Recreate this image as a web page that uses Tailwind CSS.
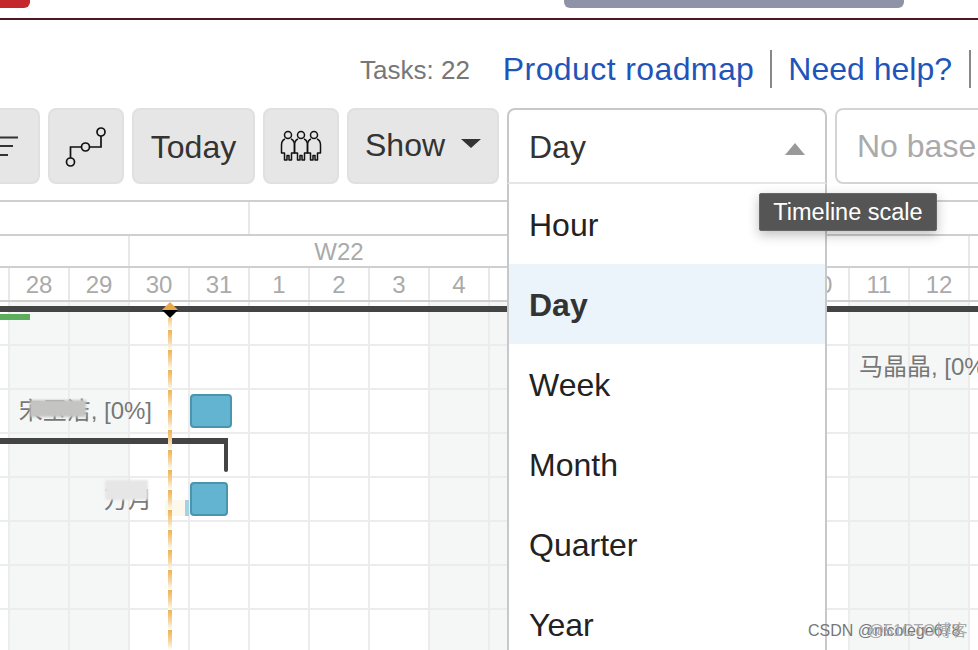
<!DOCTYPE html>
<html lang="en">
<head>
    <meta charset="UTF-8">
    <title>Gantt - Timeline scale</title>
    <script src="https://cdn.jsdelivr.net/npm/@tailwindcss/browser@4"></script>
</head>
<body class="bg-white">
<div class="relative w-[978px] h-[650px] overflow-hidden bg-white font-['Liberation_Sans','Noto_Sans_CJK_SC',sans-serif] text-[32px] text-[#333]">

    <!-- Top strip -->
    <div class="flex h-[20px] border-b-2 border-[#4a1c20]">
        <div class="w-[30px] h-[8px] bg-[#c4282a] rounded-br-md"></div>
        <div class="ml-[534px] w-[340px] h-[8px] bg-[#8f93a8] rounded-b-md"></div>
    </div>

    <!-- Links row -->
    <div class="flex justify-end items-center h-[88px] pt-[10px] pr-[7px]">
        <span class="text-[26px] text-[#777] mr-[33px] mt-[3px]">Tasks: 22</span>
        <a class="text-[#1f55b8] tracking-[0.4px]">Product roadmap</a>
        <span class="w-[2px] h-[38px] bg-[#888] mx-[16px]"></span>
        <a class="text-[#1f55b8]">Need help?</a>
        <span class="w-[2px] h-[38px] bg-[#888] ml-[17px]"></span>
    </div>

    <!-- Toolbar -->
    <div class="flex gap-[8px] h-[76px] ml-[-36px] w-[1400px]">
        <button class="flex items-center justify-center shrink-0 w-[76px] bg-[#e6e6e6] border-2 border-[#e0e0e0] rounded-lg">
            <svg width="72" height="72" viewBox="0 0 72 72" fill="none" stroke="#333" stroke-width="2"><path d="M20 27.500H52M20 36H47M20 45H42"/></svg>
        </button>
        <button class="flex items-center justify-center shrink-0 w-[76px] bg-[#e6e6e6] border-2 border-[#e0e0e0] rounded-lg">
            <svg width="48" height="48" viewBox="0 0 48 48" fill="none" stroke="#111" stroke-width="1.700">
                <circle cx="8.500" cy="40" r="4"/><circle cx="23.500" cy="25" r="4"/><circle cx="39" cy="10" r="4"/>
                <path d="M8.500 36V25H19.500M27.500 25H39V14"/>
            </svg>
        </button>
        <button class="shrink-0 w-[123px] bg-[#e6e6e6] border-2 border-[#e0e0e0] rounded-lg pt-[2px]">Today</button>
        <button class="flex items-center justify-center shrink-0 w-[76px] bg-[#e6e6e6] border-2 border-[#e0e0e0] rounded-lg">
            <svg width="42" height="32" viewBox="0 0 42 32" fill="none" stroke="#111" stroke-width="1.500" stroke-linejoin="round">
                <circle cx="8" cy="5" r="3.500"/><circle cx="21" cy="5" r="3.500"/><circle cx="34" cy="5" r="3.500"/>
                <path d="M5 9Q1.500 10.500 1.500 15V23H4.500V30H7V25.500H9V30H11.500V23H14.500V15Q14.500 10.500 11 9"/>
                <path d="M18 9Q14.500 10.500 14.500 15V23H17.500V30H20V25.500H22V30H24.500V23H27.500V15Q27.500 10.500 24 9"/>
                <path d="M31 9Q27.500 10.500 27.500 15V23H30.500V30H33V25.500H35V30H37.500V23H40.500V15Q40.500 10.500 37 9"/>
            </svg>
        </button>
        <button class="flex items-center shrink-0 w-[152px] pl-[16px] bg-[#e6e6e6] border-2 border-[#e0e0e0] rounded-lg">
            <span class="mt-[-3px]">Show</span>
            <span class="ml-[16px] mt-[-6px] w-0 h-0 border-x-[10px] border-x-transparent border-t-[9px] border-t-[#333]"></span>
        </button>

        <!-- Timeline scale select, open -->
        <div class="relative z-20 shrink-0 w-[320px]">
            <div class="flex items-center justify-between h-full pt-[2px] pl-[20px] pr-[20px] bg-white border-2 border-[#c8c8c8] border-b-[#e6e6e6] rounded-t-lg">
                <span>Day</span>
                <span class="mt-[3px] w-0 h-0 border-x-[10px] border-x-transparent border-b-[12px] border-b-[#999]"></span>
            </div>
            <div class="absolute left-0 top-[76px] w-full bg-white border-x-2 border-[#c8c8c8]">
                <div class="flex items-center h-[80px] pt-[2px] pl-[20px] text-[#222]">Hour</div>
                <div class="flex items-center h-[80px] pt-[2px] pl-[20px] font-bold bg-[#ebf3fb]">Day</div>
                <div class="flex items-center h-[80px] pt-[2px] pl-[20px] text-[#222]">Week</div>
                <div class="flex items-center h-[80px] pt-[2px] pl-[20px] text-[#222]">Month</div>
                <div class="flex items-center h-[80px] pt-[2px] pl-[20px] text-[#222]">Quarter</div>
                <div class="flex items-center h-[80px] pt-[2px] pl-[20px] text-[#222]">Year</div>
            </div>
        </div>

        <div class="flex items-center shrink-0 w-[300px] pl-[20px] border-2 border-[#d4d4d4] rounded-lg text-[#aaa]">No baseline</div>
    </div>

    <!-- Timeline scale -->
    <div class="mt-[16px] border-t-2 border-[#cfcfcf] text-[#aaa] text-[24px]">
        <div class="flex h-[34px] border-b-2 border-[#cfcfcf]">
            <div class="w-[250px] h-full border-r-2 border-[#e8e8e8]"></div>
        </div>
        <div class="flex h-[32px] border-b-2 border-[#cfcfcf]">
            <div class="w-[130px] h-full border-r-2 border-[#e8e8e8]"></div>
            <div class="w-[420px] h-full text-center leading-[32px] border-r-2 border-[#e8e8e8]">W22</div>
            <div class="w-[420px] h-full border-r-2 border-[#e8e8e8]"></div>
        </div>
        <div class="flex h-[34px] ml-[-50px] w-[1100px] border-b-2 border-[#cfcfcf] leading-[34px] text-center">
            <div class="w-[60px] border-r-2 border-[#e8e8e8]">27</div>
            <div class="w-[60px] border-r-2 border-[#e8e8e8]">28</div>
            <div class="w-[60px] border-r-2 border-[#e8e8e8]">29</div>
            <div class="w-[60px] border-r-2 border-[#e8e8e8]">30</div>
            <div class="w-[60px] border-r-2 border-[#e8e8e8]">31</div>
            <div class="w-[60px] border-r-2 border-[#e8e8e8]">1</div>
            <div class="w-[60px] border-r-2 border-[#e8e8e8]">2</div>
            <div class="w-[60px] border-r-2 border-[#e8e8e8]">3</div>
            <div class="w-[60px] border-r-2 border-[#e8e8e8]">4</div>
            <div class="w-[60px] border-r-2 border-[#e8e8e8]">5</div>
            <div class="w-[60px] border-r-2 border-[#e8e8e8]">6</div>
            <div class="w-[60px] border-r-2 border-[#e8e8e8]">7</div>
            <div class="w-[60px] border-r-2 border-[#e8e8e8]">8</div>
            <div class="w-[60px] border-r-2 border-[#e8e8e8]">9</div>
            <div class="w-[60px] border-r-2 border-[#e8e8e8]">10</div>
            <div class="w-[60px] border-r-2 border-[#e8e8e8]">11</div>
            <div class="w-[60px] border-r-2 border-[#e8e8e8]">12</div>
            <div class="w-[60px] border-r-2 border-[#e8e8e8]">13</div>
        </div>
    </div>

    <!-- Chart canvas, y 302 and down -->
    <div class="relative h-[348px]">
        <!-- day columns -->
        <div class="absolute top-0 bottom-0 left-[-50px] flex w-[1100px]">
            <div class="w-[60px] border-r-2 border-[#ececec]"></div>
            <div class="w-[60px] border-r-2 border-[#ececec] bg-[#f5f7f6]"></div>
            <div class="w-[60px] border-r-2 border-[#ececec] bg-[#f5f7f6]"></div>
            <div class="w-[60px] border-r-2 border-[#ececec]"></div>
            <div class="w-[60px] border-r-2 border-[#ececec]"></div>
            <div class="w-[60px] border-r-2 border-[#ececec]"></div>
            <div class="w-[60px] border-r-2 border-[#ececec]"></div>
            <div class="w-[60px] border-r-2 border-[#ececec]"></div>
            <div class="w-[60px] border-r-2 border-[#ececec] bg-[#f5f7f6]"></div>
            <div class="w-[60px] border-r-2 border-[#ececec] bg-[#f5f7f6]"></div>
            <div class="w-[60px] border-r-2 border-[#ececec]"></div>
            <div class="w-[60px] border-r-2 border-[#ececec]"></div>
            <div class="w-[60px] border-r-2 border-[#ececec]"></div>
            <div class="w-[60px] border-r-2 border-[#ececec]"></div>
            <div class="w-[60px] border-r-2 border-[#ececec]"></div>
            <div class="w-[60px] border-r-2 border-[#ececec] bg-[#f5f7f6]"></div>
            <div class="w-[60px] border-r-2 border-[#ececec] bg-[#f5f7f6]"></div>
            <div class="w-[60px] border-r-2 border-[#ececec]"></div>
        </div>
        <!-- rows -->
        <div class="absolute inset-0 flex flex-col">
            <div class="h-[44px] shrink-0 border-b-2 border-[#ececec]"></div>
            <div class="h-[44px] shrink-0 border-b-2 border-[#ececec]"></div>
            <div class="h-[44px] shrink-0 border-b-2 border-[#ececec]"></div>
            <div class="h-[44px] shrink-0 border-b-2 border-[#ececec]"></div>
            <div class="h-[44px] shrink-0 border-b-2 border-[#ececec]"></div>
            <div class="h-[44px] shrink-0 border-b-2 border-[#ececec]"></div>
            <div class="h-[44px] shrink-0 border-b-2 border-[#ececec]"></div>
        </div>

        <!-- tasks -->
        <div class="absolute left-0 top-[4px] w-full h-[6px] bg-[#444]"></div>
        <div class="absolute left-0 top-[12px] w-[30px] h-[6px] bg-[#5cad5c]"></div>

        <div class="absolute right-[826px] top-[91px] whitespace-nowrap text-[24px] leading-[36px] text-[#777]">宋玉洁, [0%]</div>
        <div class="absolute left-[30px] top-[98px] w-[56px] h-[17px] bg-[#c4c4c2] blur-[1px]"></div>
        <div class="absolute left-[190px] top-[92px] w-[42px] h-[34px] bg-[#62b4d0] border-2 border-[#4a94ae] rounded-[4px]"></div>

        <div class="absolute left-0 top-[136px] w-[228px] h-[6px] bg-[#444] rounded-tr-[3px]"></div>
        <div class="absolute left-[224px] top-[136px] w-[4px] h-[34px] bg-[#444] rounded-b-[2px]"></div>

        <div class="absolute right-[826px] top-[180px] whitespace-nowrap text-[24px] leading-[36px] text-[#777]">万月</div>
        <div class="absolute left-[105px] top-[178px] w-[43px] h-[20px] bg-[#e6e6e6] blur-[1px]"></div>
        <div class="absolute left-[165px] top-[198px] w-[20px] h-[16px] bg-[#fdf8ec]"></div>
        <div class="absolute left-[185px] top-[198px] w-[4px] h-[16px] bg-[#a5d2e2]"></div>
        <div class="absolute left-[190px] top-[180px] w-[38px] h-[34px] bg-[#62b4d0] border-2 border-[#4a94ae] rounded-[4px]"></div>

        <div class="absolute left-[859px] top-[47px] whitespace-nowrap text-[24px] leading-[36px] text-[#777]">马晶晶, [0%]</div>

        <!-- today marker -->
        <div class="absolute left-[168px] top-[16px] bottom-0 w-[4px] bg-[linear-gradient(to_bottom,#f0b34f_0%,#f6d9a8_60%,#ffffff_100%)] bg-[length:4px_20px] bg-[position:0_12px]"></div>
        <svg class="absolute left-[161px] top-0" width="18" height="17" viewBox="0 0 18 17">
            <path d="M9 0L17 8H1Z" fill="#e9a94b"/><path d="M1 8H17L9 16Z" fill="#000"/>
        </svg>
    </div>

    <!-- Tooltip over the select -->
    <div class="absolute z-30 left-[759px] top-[193px] w-[178px] h-[38px] flex items-center justify-center pt-[1px] bg-[#555] border border-[#666] rounded-[2px] shadow-[0_4px_12px_rgba(0,0,0,0.25)] text-white text-[23.500px]">Timeline scale</div>

    <!-- Image watermark -->
    <div class="absolute z-30 left-[808px] top-[622px] text-[16px] leading-[18px] text-[#777] whitespace-nowrap">CSDN @nicolege678</div>
    <div class="absolute z-30 left-[868px] top-[622px] text-[16px] leading-[18px] text-[#aaa] whitespace-nowrap">@51CTO博客</div>
</div>
</body>
</html>
